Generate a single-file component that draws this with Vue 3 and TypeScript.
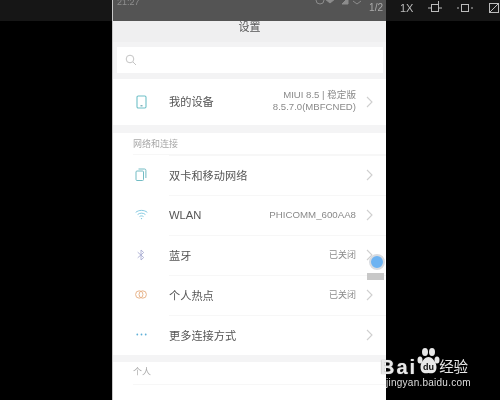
<script setup lang="ts">
interface Row { label: string; value?: string; icon: string }
const rows: Row[] = [
  { label: '双卡和移动网络', icon: 'sim' },
  { label: 'WLAN', value: 'PHICOMM_600AA8', icon: 'wifi' },
  { label: '蓝牙', value: '已关闭', icon: 'bt' },
  { label: '个人热点', value: '已关闭', icon: 'hot' },
  { label: '更多连接方式', icon: 'more' }
]
</script>

<template>
  <div class="screen">
    <div class="side"></div>
    <main class="phone">
      <div class="status">
        <span class="time">21:27</span>
        <svg class="status-icons" width="50" height="6" viewBox="0 0 50 6" fill="none" stroke="#8c8c8c">
          <circle cx="5" cy="0" r="4" />
          <path d="M15 3l5-4h-10z" fill="#8c8c8c" />
          <path d="M27 4h6V-2z" fill="#8c8c8c" />
          <path d="M38 1l4 3 4-3" />
        </svg>
        <span class="page">1/2</span>
      </div>
      <div class="title">设置</div>
      <div class="search-wrap">
        <div class="search">
          <svg width="12" height="12" viewBox="0 0 12 12" fill="none" stroke="#c4c4c4" stroke-width="1">
            <circle cx="5" cy="5" r="3.8" /><path d="M8 8l3 3" />
          </svg>
        </div>
      </div>
      <div class="device">
        <svg class="ic" width="11" height="14" viewBox="0 0 11 14" fill="none" stroke="#6fc0c8" stroke-width="1.1">
          <rect x="1" y="1" width="9" height="12" rx="1.2" /><path d="M4.500 10.800h2" stroke="#5a9aa5" />
        </svg>
        <span class="label">我的设备</span>
        <span class="device-val"><span>MIUI 8.5 | 稳定版</span><span>8.5.7.0(MBFCNED)</span></span>
        <svg class="chev" width="8" height="12" viewBox="0 0 8 12" fill="none" stroke="#cfcfcf" stroke-width="1.1"><path d="M1 1l5 5-5 5" /></svg>
      </div>
      <div class="gap"></div>
      <div class="section">网络和连接</div>
      <div v-for="r in rows" :key="r.label" class="row">
        <span class="icw">
          <svg v-if="r.icon === 'sim'" width="12" height="13" viewBox="0 0 12 13" fill="none" stroke="#72bcc4" stroke-width="1">
            <rect x="1" y="3" width="7.500" height="9.500" rx="1" /><path d="M3.500 1h6a1.400 1.400 0 0 1 1.400 1.400V10" />
          </svg>
          <svg v-else-if="r.icon === 'wifi'" width="13" height="11" viewBox="0 0 13 11" fill="none" stroke="#78c4de" stroke-width=".9">
            <path d="M.7 3.400c3.200-2.700 8.400-2.700 11.600 0M2.600 5.500c2.100-1.800 5.700-1.800 7.800 0M4.500 7.600c1-.9 3-.9 4 0" /><circle cx="6.500" cy="9.600" r=".7" fill="#78c4de" stroke="none" />
          </svg>
          <svg v-else-if="r.icon === 'bt'" width="8" height="12" viewBox="0 0 8 12" fill="none" stroke="#a9aed2" stroke-width=".9">
            <path d="M.7 3.200l6 5.300L4 11V1l2.700 2.500L.7 8.800" />
          </svg>
          <svg v-else-if="r.icon === 'hot'" width="12" height="9" viewBox="0 0 12 9" fill="none" stroke="#e8b58c" stroke-width="1">
            <circle cx="4.300" cy="4.500" r="3.700" /><circle cx="7.700" cy="4.500" r="3.700" />
          </svg>
          <svg v-else width="11" height="3" viewBox="0 0 11 3" fill="#5fb0d8">
            <circle cx="1.300" cy="1.500" r=".9" /><circle cx="5.500" cy="1.500" r=".9" /><circle cx="9.700" cy="1.500" r=".9" />
          </svg>
        </span>
        <div class="body">
          <span class="label">{{ r.label }}</span>
          <span v-if="r.value" class="value" :class="{ off: r.value === '已关闭' }">{{ r.value }}</span>
          <svg class="chev" width="8" height="12" viewBox="0 0 8 12" fill="none" stroke="#cfcfcf" stroke-width="1.1"><path d="M1 1l5 5-5 5" /></svg>
        </div>
      </div>
      <div class="gap small"></div>
      <div class="section second">个人</div>
      <span class="float"><i></i><b></b></span>
    </main>
    <div class="side right">
      <div class="tools">
        <span>1X</span>
        <svg width="14" height="14" viewBox="0 0 14 14" fill="none" stroke="#bbb"><rect x="3.500" y="3.500" width="7" height="7" /><path d="M0 7h3M11 7h3M10.500 0v3" /></svg>
        <svg width="16" height="14" viewBox="0 0 16 14" fill="none" stroke="#bbb"><rect x="4.500" y="3.500" width="7" height="7" /><path d="M0 7h2M14 7h2" /></svg>
        <svg width="12" height="12" viewBox="0 0 12 12" fill="none" stroke="#bbb"><rect x="1.500" y="1.500" width="9" height="9" /><path d="M1.500 10.500l9-9" /></svg>
      </div>
      <div class="mark">
        <div class="brand">
          <span class="bai">Bai</span>
          <svg class="paw" width="23" height="28" viewBox="0 0 23 28" fill="#e8e8e8">
            <ellipse cx="3" cy="13" rx="2.500" ry="3.500" /><ellipse cx="8" cy="5" rx="3" ry="4" /><ellipse cx="15" cy="5" rx="3" ry="4" /><ellipse cx="20" cy="13" rx="2.500" ry="3.500" />
            <path d="M11.500 10c-3.500 0-8 5-8 10 0 6 4 7 8 6 4 1 8 0 8-6 0-5-4.500-10-8-10z" />
            <text x="11.500" y="23" text-anchor="middle" font-size="9" font-weight="700" fill="#111" font-family="Liberation Sans">du</text>
          </svg>
          <span class="jy">经验</span>
        </div>
        <div class="url">jingyan.baidu.com</div>
      </div>
    </div>
  </div>
</template>

<style>
html, body { margin: 0; background: #000; }
</style>

<style scoped>
.screen {
  width: 500px; height: 400px; display: flex; overflow: hidden; background: #000; filter: blur(.35px);
  font-family: "Noto Sans CJK SC", "Liberation Sans", sans-serif;
}
.side { width: 112px; flex: none; height: 21px; background: #161616; }
.side.right { width: 114px; position: relative; }
.phone {
  width: 273px; flex: none; height: 400px; background: #fff; position: relative;
  border-left: 1px solid #c8c8c8;
}
.status {
  height: 21px; background: #545454; color: #8f8f8f; font-size: 9px; line-height: 4px;
  display: flex; align-items: flex-start; padding: 0 3px 0 4px; overflow: hidden;
}
.time { font-family: "Liberation Sans", sans-serif; }
.status-icons { margin-left: auto; margin-right: 4px; }
.page { font-size: 10px; line-height: 15px; color: #aaa; font-family: "Liberation Sans", sans-serif; }
.title {
  height: 21px; background: #efeff0; text-align: center; font-size: 11px; line-height: 10px; color: #555;
}
.search-wrap { height: 37px; background: #f3f3f4; padding: 5px 3px 0 4px; box-sizing: border-box; }
.search { height: 26px; background: #fff; display: flex; align-items: center; padding-left: 8px; }
.device { height: 46px; display: flex; align-items: center; background: #fff; padding: 0 12px 0 23px; }
.ic { margin-right: 22px; flex: none; }
.label {
  font-size: 11.200px; color: #555; padding-bottom: 2px;
  font-family: "Liberation Sans", "Noto Sans CJK SC", sans-serif;
}
.device-val {
  margin-left: auto; margin-right: 10px; display: flex; flex-direction: column; align-items: flex-end;
  font-size: 9.600px; line-height: 12.500px; color: #8a8a8a;
  font-family: "Liberation Sans", "Noto Sans CJK SC", sans-serif; padding-bottom: 2px;
}
.chev { flex: none; margin-bottom: 1px; }
.gap { height: 8px; background: #f4f4f5; }
.gap.small { height: 7px; }
.section {
  height: 22px; box-sizing: border-box; line-height: 21px; font-size: 9px; color: #a8a8a8;
  margin-left: 20px; border-bottom: 1px solid #f7f7f7;
}
.section.second { height: 23px; line-height: 20px; color: #aaa; }
.row { height: 40px; display: flex; align-items: stretch; background: #fff; }
.row:first-of-type .body { border-top: 0; }
.icw { width: 56px; flex: none; display: flex; justify-content: center; align-items: center; padding-bottom: 1px; box-sizing: border-box; }
.body {
  flex: 1; display: flex; align-items: center; padding-right: 12px; border-top: 1px solid #f7f7f7;
}
.body .chev { margin-left: auto; margin-bottom: 2px; }
.body .value + .chev { margin-left: 0; }
.value {
  margin-left: auto; margin-right: 10px; font-size: 9.700px; color: #8a8a8a;
  font-family: "Liberation Sans", "Noto Sans CJK SC", sans-serif; padding-bottom: 2px;
}
.value.off { font-size: 9px; }
.float { position: absolute; left: 254px; top: 254px; width: 18px; }
.float i {
  display: block; width: 12px; height: 12px; border-radius: 50%; background: #6db3f2;
  border: 2px solid #d8dbe0; margin-left: 2px;
}
.float b { display: block; width: 17px; height: 7px; background: #c8c8c8; margin-top: 3px; }
.tools {
  position: absolute; left: 14px; top: 0; display: flex; align-items: center; gap: 15px; height: 15px;
  color: #bbb; font-size: 11px; font-family: "Liberation Sans", sans-serif;
}
.mark {
  position: absolute; left: -6px; top: 347px; color: #e8e8e8; white-space: nowrap;
  font-family: "Liberation Sans", "Noto Sans CJK SC", sans-serif;
}
.brand { display: flex; align-items: flex-end; height: 28px; }
.bai { font-size: 20px; line-height: 20px; font-weight: 700; letter-spacing: 2px; margin-bottom: -2px; text-shadow: 0 0 1px #888; }
.paw { flex: none; margin-left: 0; }
.jy { font-size: 14.500px; line-height: 16px; margin-left: -1px; }
.url { font-size: 10px; line-height: 12px; letter-spacing: .25px; margin: 2px 0 0 6px; color: #ddd; }
</style>
